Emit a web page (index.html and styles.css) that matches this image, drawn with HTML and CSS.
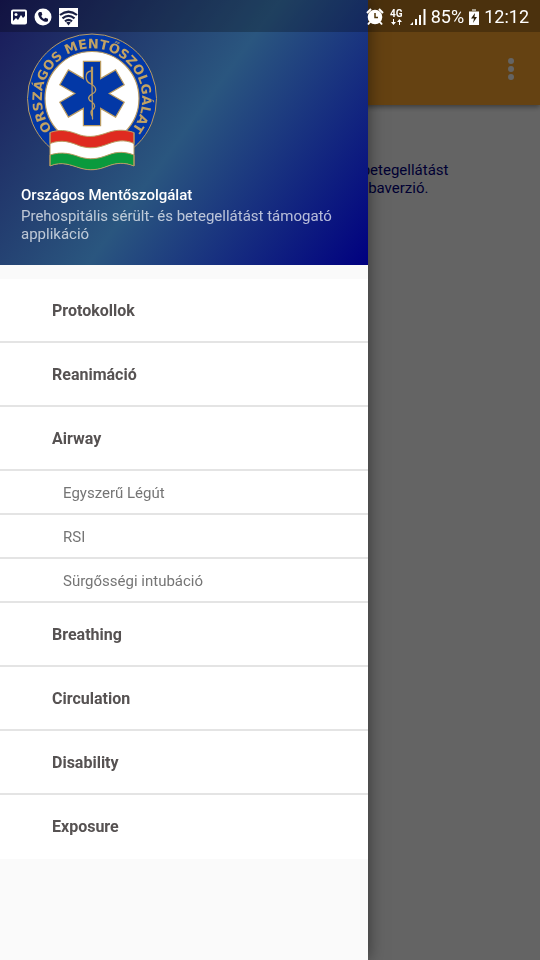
FILE: index.html
```
<!DOCTYPE html>
<html lang="hu">
<head>
<meta charset="utf-8">
<meta name="viewport" content="width=device-width, initial-scale=1">
<title>Országos Mentőszolgálat</title>
<link rel="stylesheet" href="styles.css">
</head>
<body>
<div class="screen">
  <header class="appbar">
    <button class="overflow" type="button" aria-label="Menü">
      <svg width="6" height="22" viewBox="0 0 6 22"><circle cx="3" cy="3" r="3"/><circle cx="3" cy="11" r="3"/><circle cx="3" cy="19" r="3"/></svg>
    </button>
  </header>
  <main class="content">
    <p>Prehospitális sérült- és betegellátást<br>támogató applikáció próbaverzió.</p>
  </main>
</div>

<div class="scrim"></div>

<aside class="drawer">
  <div class="profile">
    <svg class="logo" width="132" height="140" viewBox="26 32 132 140" role="img" aria-label="Országos Mentőszolgálat">
      <defs><path id="ring" d="M51 127.500A50.2 50.2 0 1 1 133 127.500"/></defs>
      <circle cx="92" cy="98.5" r="64.5" fill="#0338a6" stroke="#b99b62"/>
      <circle cx="92" cy="98.5" r="47" fill="#fff" stroke="#b99b62" stroke-width="1.2"/>
      <text class="ring-text"><textPath href="#ring" startOffset="50%">ORSZÁGOS MENTŐSZOLGÁLAT</textPath></text>
      <path fill="#0338a6" stroke="#b99b62" stroke-width="1.2" d="M83.4 61.3H100.6V78.6L115.6 69.9L124.2 84.8L109.2 93.5L124.2 102.2L115.6 117.1L100.6 108.4V125.7H83.4V108.4L68.4 117.1L59.8 102.2L74.8 93.5L59.8 84.8L68.4 69.9L83.4 78.6Z"/>
      <path fill="none" stroke="#b99b62" stroke-width="2.2" stroke-linecap="round" d="M92 67.5V84"/>
      <path fill="none" stroke="#b99b62" stroke-width="1.3" stroke-linecap="round" d="M92 84L92.500 119M91 71C84 72 85 82 91 84C97 87 97 92 92 94C87 97 88 100 92 102C96 105 95 108 92 110C90 112 91 114 92 116"/>
      <path fill="#fff" d="M50 132.500C62 128 72 132 80 135C90 138 98 136 108 132.500C118 129 126 130 134 132.500V166C124 162 116 163 108 166C98 170 90 171 80 168C70 165 62 161 50 166Z"/>
      <path fill="#df2b20" stroke="#b99b62" d="M50 132.500C62 128 72 132 80 135C90 138 98 136 108 132.500C118 129 126 130 134 132.500V143.500C124 139 116 141 108 144C98 148 90 149 80 146C70 142 62 139 50 143.500Z"/>
      <path fill="#0a9a3d" stroke="#b99b62" d="M50 155C62 151 72 154 80 157C90 160 98 159 108 155C118 151 126 152 134 155V166C124 162 116 163 108 166C98 170 90 171 80 168C70 165 62 161 50 166Z"/>
      <path fill="none" stroke="#b99b62" d="M50 132.500V166M134 132.500V166"/>
    </svg>
    <h1>Országos Mentőszolgálat</h1>
    <p>Prehospitális sérült- és betegellátást támogató applikáció</p>
  </div>
  <nav>
    <ul class="menu">
      <li><a href="#protokollok">Protokollok</a></li>
      <li><a href="#reanimacio">Reanimáció</a></li>
      <li><a href="#airway">Airway</a>
        <ul class="submenu">
          <li><a href="#legut">Egyszerű Légút</a></li>
          <li><a href="#rsi">RSI</a></li>
          <li><a href="#intubacio">Sürgősségi intubáció</a></li>
        </ul>
      </li>
      <li><a href="#breathing">Breathing</a></li>
      <li><a href="#circulation">Circulation</a></li>
      <li><a href="#disability">Disability</a></li>
      <li><a href="#exposure">Exposure</a></li>
    </ul>
  </nav>
</aside>

<div class="statusbar">
  <div class="group notices">
    <svg width="16" height="16" viewBox="0 0 16 16"><rect x="1" y="1.500" width="14" height="13" rx="1" fill="none" stroke="#fff" stroke-width="2"/><path fill="#fff" d="M2 12L5 9L7 11L10 6L12 9L14 7V14H2Z"/><circle cx="5" cy="5.500" r="1.500" fill="#fff"/></svg>
    <svg width="18" height="18" viewBox="0 0 18 18"><circle cx="9" cy="9" r="8.500" fill="#fff"/><path fill="#16183f" d="M5.500 4L7.500 4L8.300 6.800L7.200 8C7.800 9.300 8.700 10.300 10 11L11.200 9.800L14 10.700V12.700C13.500 13.700 12.500 14 11.500 13.800C7.800 13 5 10 4.200 6.500C4 5.500 4.500 4.500 5.500 4Z"/></svg>
    <svg width="19" height="19" viewBox="0 0 19 19"><rect width="19" height="19" fill="#fff"/><g fill="none" stroke="#1a2044" stroke-width="2.200"><path d="M1 7Q9.500 .5 18 7M3.500 10.300Q9.500 5.300 15.500 10.300M6 13.300Q9.500 10.300 13 13.300"/></g><path fill="#1a2044" d="M7.200 14.500Q9.500 13 11.800 14.500L9.500 17.500Z"/></svg>
  </div>
  <div class="group system">
    <svg width="18" height="18" viewBox="0 0 18 18"><circle cx="9" cy="9" r="7.300" fill="#fff"/><path fill="none" stroke="#fff" stroke-width="2" d="M1 5L5 1M17 5L13 1M4 14L2 16.500M14 14L16 16.500"/><path fill="none" stroke="#4d350a" stroke-width="1.500" d="M9 5V9.500H12"/></svg>
    <svg class="network" width="16" height="20" viewBox="0 0 16 20"><text x="1" y="10">4G</text><path fill="#fff" d="M2 15H7L4.500 18ZM4 12H5V15H4ZM8 15H13L10.500 12ZM10 15H11V18H10Z"/></svg>
    <svg width="16" height="16" viewBox="0 0 16 16" fill="#fff"><path d="M0 16L3 13V16ZM5 10H7V16H5ZM9 6H11V16H9ZM13.500 0H15.500V16H13.500Z"/></svg>
    <span>85%</span>
    <svg width="10" height="16" viewBox="0 0 10 16"><path fill="#aaa08c" d="M3 0H7V2H10V4H0V2H3Z"/><path fill="#fff" d="M0 3H10V16H0Z"/><path fill="#2d2008" d="M6 4L2 9.500H5L4 14L8 8H5.500Z"/></svg>
    <time>12:12</time>
  </div>
</div>
</body>
</html>
```
FILE: styles.css
```
* {
  box-sizing: border-box;
}

body {
  margin: 0;
  min-height: 100vh;
  background: #fafafa;
  font-family: Roboto, "Liberation Sans", sans-serif;
  font-size: 15px;
  line-height: 18px;
}

h1, p, ul {
  margin: 0;
  padding: 0;
}

ul {
  list-style: none;
}

a {
  color: inherit;
  text-decoration: none;
}

svg {
  display: block;
  flex: none;
}

/* Page below the drawer */
.appbar {
  display: flex;
  align-items: center;
  justify-content: flex-end;
  height: 105px;
  padding: 32px 24px 0;
  background: #fda52f;
  box-shadow: 0 2px 5px rgba(0, 0, 0, .4);
}

.overflow {
  padding: 0 2px;
  border: 0;
  background: none;
}

.overflow svg {
  fill: #fafafa;
}

.content {
  padding: 56px 16px 16px 206px;
  color: #000080;
  white-space: nowrap;
}

.scrim {
  position: fixed;
  inset: 0;
  background: rgba(0, 0, 0, .6);
}

/* Drawer */
.drawer {
  position: absolute;
  top: 0;
  left: 0;
  width: 368px;
  max-width: 85%;
  min-height: 100%;
  background: #fafafa;
  box-shadow: 0 0 16px rgba(0, 0, 0, .5);
}

.profile {
  padding: 32px 21px 22px;
  background: linear-gradient(126deg, #191959, #2a567f 50%, #000080);
  color: #fff;
}

.logo {
  margin: 0 0 14px 5px;
}

.ring-text {
  fill: #c2a263;
  font: bold 13px "DejaVu Sans", sans-serif;
  text-anchor: middle;
}

.profile h1 {
  margin-bottom: 3px;
  font-size: 15px;
  font-weight: 500;
  line-height: 18px;
}

.profile p {
  color: rgba(255, 255, 255, .7);
}

.menu {
  margin-top: 14px;
  color: #565252;
}

.menu a {
  display: flex;
  align-items: center;
  height: 64px;
  padding: 2px 16px 0 52px;
  border-bottom: 2px solid #e4e4e4;
  background: #fff;
  font-size: 16px;
  font-weight: 700;
}

.menu > li:last-child > a {
  border-bottom-color: #fff;
}

.menu .submenu a {
  height: 44px;
  padding-left: 63px;
  color: #757575;
  font-size: 15px;
  font-weight: 400;
}

/* System status bar */
.statusbar {
  position: fixed;
  top: 0;
  left: 0;
  right: 0;
  display: flex;
  align-items: center;
  justify-content: space-between;
  height: 32px;
  padding: 2px 11px 0;
  background: rgba(0, 0, 0, .25);
  color: #fff;
  font-size: 18px;
}

.group {
  display: flex;
  align-items: center;
}

.notices {
  gap: 7px;
}

.system {
  gap: 5px;
}

.network text {
  fill: #fff;
  font: bold 10px Roboto, sans-serif;
}
```
